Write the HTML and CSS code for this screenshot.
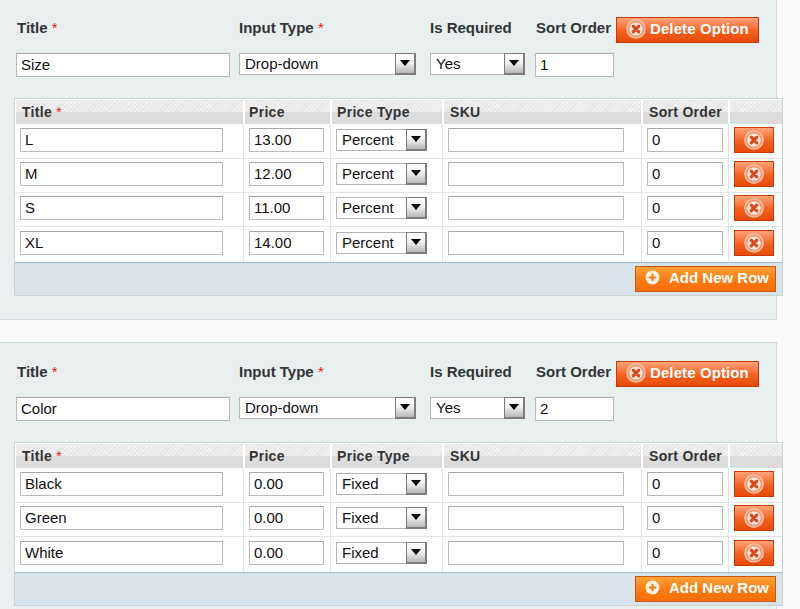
FILE: index.html
```html
<!DOCTYPE html>
<html lang="en">
<head>
<meta charset="utf-8">
<title>Custom Options</title>
<link rel="stylesheet" href="styles.css">
</head>
<body>
<svg class="defs" width="0" height="0" aria-hidden="true">
  <defs>
    <symbol id="icon-x" viewBox="0 0 20 20">
      <circle cx="10" cy="10" r="9.2" fill="#f29a74" stroke="#fbc4a8" stroke-width="1.2"/>
      <circle cx="10" cy="10" r="6.6" fill="#fdeadf"/>
      <path d="M7.2 7.2l5.6 5.6M12.8 7.2l-5.6 5.6" stroke="#d8481c" stroke-width="3.1" stroke-linecap="round"/>
    </symbol>
    <symbol id="icon-plus" viewBox="0 0 16 16">
      <circle cx="8" cy="8" r="7.4" fill="#fff4e4"/>
      <path d="M8 4v8M4 8h8" stroke="#f47a10" stroke-width="2.2"/>
    </symbol>
  </defs>
</svg>

<section class="panel panel-first">
  <div class="option-head">
    <label class="lbl lbl-title">Title <em>*</em></label>
    <label class="lbl lbl-type">Input Type <em>*</em></label>
    <label class="lbl lbl-req">Is Required</label>
    <label class="lbl lbl-sort">Sort Order</label>
    <button class="btn btn-delete" type="button"><svg class="ico-x"><use href="#icon-x"/></svg>Delete Option</button>
  </div>
  <div class="option-fields">
    <input class="field f-title" value="Size">
    <div class="select s-type"><span>Drop-down</span><i class="arrow"></i></div>
    <div class="select s-req"><span>Yes</span><i class="arrow"></i></div>
    <input class="field f-sort" value="1">
  </div>
  <div class="grid-wrap">
    <table class="grid">
      <colgroup><col class="c1"><col class="c2"><col class="c3"><col class="c4"><col class="c5"><col class="c6"></colgroup>
      <thead><tr><th>Title <em>*</em></th><th>Price</th><th>Price Type</th><th>SKU</th><th>Sort Order</th><th></th></tr></thead>
      <tbody>
        <tr><td><input class="field w-title" value="L"></td><td><input class="field w-price" value="13.00"></td><td><div class="select s-price"><span>Percent</span><i class="arrow"></i></div></td><td><input class="field w-sku"></td><td><input class="field w-order" value="0"></td><td><button class="btn btn-del" type="button" aria-label="Delete"><svg class="ico-x"><use href="#icon-x"/></svg></button></td></tr>
        <tr><td><input class="field w-title" value="M"></td><td><input class="field w-price" value="12.00"></td><td><div class="select s-price"><span>Percent</span><i class="arrow"></i></div></td><td><input class="field w-sku"></td><td><input class="field w-order" value="0"></td><td><button class="btn btn-del" type="button" aria-label="Delete"><svg class="ico-x"><use href="#icon-x"/></svg></button></td></tr>
        <tr><td><input class="field w-title" value="S"></td><td><input class="field w-price" value="11.00"></td><td><div class="select s-price"><span>Percent</span><i class="arrow"></i></div></td><td><input class="field w-sku"></td><td><input class="field w-order" value="0"></td><td><button class="btn btn-del" type="button" aria-label="Delete"><svg class="ico-x"><use href="#icon-x"/></svg></button></td></tr>
        <tr><td><input class="field w-title" value="XL"></td><td><input class="field w-price" value="14.00"></td><td><div class="select s-price"><span>Percent</span><i class="arrow"></i></div></td><td><input class="field w-sku"></td><td><input class="field w-order" value="0"></td><td><button class="btn btn-del" type="button" aria-label="Delete"><svg class="ico-x"><use href="#icon-x"/></svg></button></td></tr>
      </tbody>
    </table>
    <div class="grid-foot"><button class="btn btn-add" type="button"><svg class="ico-plus"><use href="#icon-plus"/></svg>Add New Row</button></div>
  </div>
</section>

<section class="panel panel-second">
  <div class="option-head">
    <label class="lbl lbl-title">Title <em>*</em></label>
    <label class="lbl lbl-type">Input Type <em>*</em></label>
    <label class="lbl lbl-req">Is Required</label>
    <label class="lbl lbl-sort">Sort Order</label>
    <button class="btn btn-delete" type="button"><svg class="ico-x"><use href="#icon-x"/></svg>Delete Option</button>
  </div>
  <div class="option-fields">
    <input class="field f-title" value="Color">
    <div class="select s-type"><span>Drop-down</span><i class="arrow"></i></div>
    <div class="select s-req"><span>Yes</span><i class="arrow"></i></div>
    <input class="field f-sort" value="2">
  </div>
  <div class="grid-wrap">
    <table class="grid">
      <colgroup><col class="c1"><col class="c2"><col class="c3"><col class="c4"><col class="c5"><col class="c6"></colgroup>
      <thead><tr><th>Title <em>*</em></th><th>Price</th><th>Price Type</th><th>SKU</th><th>Sort Order</th><th></th></tr></thead>
      <tbody>
        <tr><td><input class="field w-title" value="Black"></td><td><input class="field w-price" value="0.00"></td><td><div class="select s-price"><span>Fixed</span><i class="arrow"></i></div></td><td><input class="field w-sku"></td><td><input class="field w-order" value="0"></td><td><button class="btn btn-del" type="button" aria-label="Delete"><svg class="ico-x"><use href="#icon-x"/></svg></button></td></tr>
        <tr><td><input class="field w-title" value="Green"></td><td><input class="field w-price" value="0.00"></td><td><div class="select s-price"><span>Fixed</span><i class="arrow"></i></div></td><td><input class="field w-sku"></td><td><input class="field w-order" value="0"></td><td><button class="btn btn-del" type="button" aria-label="Delete"><svg class="ico-x"><use href="#icon-x"/></svg></button></td></tr>
        <tr><td><input class="field w-title" value="White"></td><td><input class="field w-price" value="0.00"></td><td><div class="select s-price"><span>Fixed</span><i class="arrow"></i></div></td><td><input class="field w-sku"></td><td><input class="field w-order" value="0"></td><td><button class="btn btn-del" type="button" aria-label="Delete"><svg class="ico-x"><use href="#icon-x"/></svg></button></td></tr>
      </tbody>
    </table>
    <div class="grid-foot"><button class="btn btn-add" type="button"><svg class="ico-plus"><use href="#icon-plus"/></svg>Add New Row</button></div>
  </div>
</section>
</body>
</html>
```
FILE: styles.css
```css
* { box-sizing: border-box; }
html, body { margin: 0; padding: 0; height: 609px; overflow: hidden; }
body { background: #fafafa; font-family: "Liberation Sans", Arial, sans-serif; font-size: 15px; color: #111; }
.defs { position: absolute; }
em { color: #e41b1b; font-style: normal; font-weight: normal; }

.panel { width: 777px; background: #e7efef; border-right: 1px solid #cfdcdc; border-bottom: 1px solid #cfdcdc; padding-top: 17px; }
.panel-first { height: 320px; }
.panel-second { height: 267px; margin-top: 22px; border-top: 1px solid #cfdcdc; border-bottom: 0; padding-top: 18px; }

.option-head { display: flex; align-items: flex-start; height: 26px; padding-left: 17px; }
.lbl { display: block; font-weight: bold; color: #333; line-height: 22px; }
.lbl-title { width: 222px; }
.lbl-type { width: 191px; }
.lbl-req { width: 106px; }
.lbl-sort { width: 80px; }

.option-fields { display: flex; align-items: flex-start; margin-top: 10px; padding-left: 16px; height: 24px; }
.field { display: block; height: 24px; border: 1px solid #bbb; border-top-color: #a8a8a8; background: #fff; font: 15px "Liberation Sans", Arial, sans-serif; color: #111; padding: 0 4px 2px; margin: 0; outline: 0; }
.f-title { width: 214px; margin-right: 9px; }
.f-sort { width: 79px; margin-left: 10px; }

.select { display: flex; align-items: stretch; justify-content: space-between; height: 22px; border: 1px solid #b5b5b5; background: #fff; line-height: 20px; padding-left: 5px; color: #111; }
.select .arrow { display: block; width: 21px; margin: -1px -1px -1px 0; border: 2px solid #7c7c7c; border-left-width: 1px; border-top-width: 1px; background: linear-gradient(#fff, #f2f2f2 45%, #b8b8b8); position: relative; }
.select .arrow::after { content: ""; position: absolute; left: 4px; top: 6px; border: 5px solid transparent; border-top: 6px solid #000; border-bottom: 0; }
.s-type { width: 177px; }
.s-req { width: 95px; margin-left: 14px; }
.s-price { width: 91px; margin-top: 1px; }

.grid-wrap { width: 769px; margin: 21px 0 0 14px; border: 1px solid #ccd3d3; background: #fff; }
.grid { width: 767px; table-layout: fixed; border-collapse: separate; border-spacing: 0; background: #fff; }
.c1 { width: 228px; } .c2 { width: 87px; } .c3 { width: 112px; } .c4 { width: 199px; } .c5 { width: 87px; } .c6 { width: 54px; }

.grid th { height: 25px; padding: 0 0 0 5px; text-align: left; font-size: 14px; font-weight: bold; color: #333; letter-spacing: .3px; line-height: 24px; border-left: 2px solid #fff; border-top: 1px solid #fff;
  background: linear-gradient(#dcdcdc, #dcdcdc) bottom / 100% 12px no-repeat, repeating-linear-gradient(135deg, #e4e4e4 0 1px, #f0f0f0 1px 3px); }
.grid th:nth-child(1) { border-left-width: 1px; padding-left: 6px; }
.grid th:nth-child(2) { padding-left: 4px; }
.grid th:nth-child(4), .grid th:nth-child(5) { padding-left: 6px; }

.grid td { height: 34px; padding: 3px 0 0 5px; border-left: 1px solid #dfe5e5; border-bottom: 1px solid #dfe5e5; vertical-align: top; }
.grid td:first-child { border-left: 0; }
.grid tbody tr:first-child td, .grid tbody tr:last-child td { height: 35px; padding-top: 4px; }
.grid tbody tr:last-child td { border-bottom-color: #fff; }

.w-title { width: 203px; }
.w-price { width: 75px; }
.w-sku { width: 176px; }
.w-order { width: 76px; }

.btn { display: flex; align-items: center; cursor: pointer; padding: 0 0 3px; font: bold 15px "Liberation Sans", Arial, sans-serif; color: #fff; }
.btn-delete { width: 143px; height: 26px; border: 1px solid #c73a05; background: linear-gradient(#ffa47c, #f2601f 55%, #e94a08); padding-left: 9px; flex: none; letter-spacing: .1px; }
.btn-delete .ico-x { margin-right: 4px; }
.ico-x { display: block; width: 20px; height: 20px; }
.btn-del { width: 40px; height: 26px; justify-content: center; padding: 0; border: 1px solid #c73a05; background: linear-gradient(#ffa47c, #f2601f 55%, #e94a08); margin-top: -1px; }

.grid-foot { display: flex; justify-content: flex-end; align-items: flex-start; height: 33px; padding: 3px 6px 0 0; background: #d7e4ec; border-top: 1px solid #a9b8c4; }
.btn-add { width: 141px; height: 26px; border: 1px solid #c9580e; background: linear-gradient(#ffa338, #fb7c14 50%, #f76d07); padding-left: 9px; }
.ico-plus { display: block; width: 15px; height: 15px; margin-right: 9px; }
```
